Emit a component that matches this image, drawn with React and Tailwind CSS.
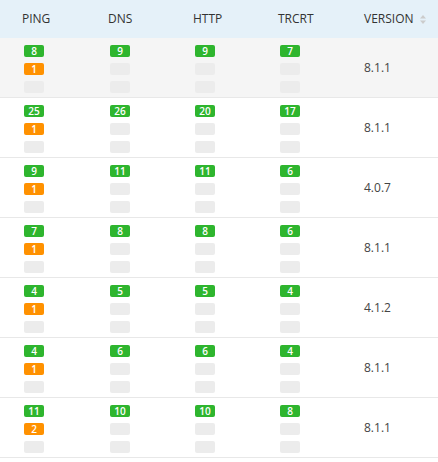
import React from "react";

const rows = [
  { v: [8, 9, 9, 7], o: 1, ver: "8.1.1", alt: true },
  { v: [25, 26, 20, 17], o: 1, ver: "8.1.1" },
  { v: [9, 11, 11, 6], o: 1, ver: "4.0.7" },
  { v: [7, 8, 8, 6], o: 1, ver: "8.1.1" },
  { v: [4, 5, 5, 4], o: 1, ver: "4.1.2" },
  { v: [4, 6, 6, 4], o: 1, ver: "8.1.1" },
  { v: [11, 10, 10, 8], o: 2, ver: "8.1.1" },
];

const widths = ["w-[86px]", "w-[85px]", "w-[85px]", "w-[86px]"];

function Badge({ color, children }) {
  return (
    <div
      className={`w-[20px] h-[12px] rounded-[2px] ${color} text-white text-[10px] leading-[12px] font-semibold text-center`}
    >
      {children}
    </div>
  );
}

function Cell({ value, orange, w }) {
  return (
    <div className={`${w} pl-[24px] pt-[7px] flex flex-col gap-[6px]`}>
      <Badge color="bg-[#2eb52e]">{value}</Badge>
      {orange ? (
        <Badge color="bg-[#ff9100]">{orange}</Badge>
      ) : (
        <Badge color="bg-[#ececec]" />
      )}
      <Badge color="bg-[#ececec]" />
    </div>
  );
}

export default function App() {
  return (
    <div
      className="w-[438px] h-[462px] bg-white text-[12px]"
      style={{ fontFamily: '"Open Sans", sans-serif' }}
    >
      <div className="h-[38px] bg-[#e5f1f9] flex items-center text-[#333]">
        {["PING", "DNS", "HTTP", "TRCRT"].map((h, i) => (
          <div key={h} className={`${widths[i]} pl-[22px]`}>
            {h}
          </div>
        ))}
        <div className="flex-1 pl-[22px] flex items-center gap-[6px]">
          <span>VERSION</span>
          <svg width="6" height="9" viewBox="0 0 6 9">
            <path d="M3 0 L6 3.5 L0 3.5 Z" fill="#cccccc" />
            <path d="M0 5.5 L6 5.5 L3 9 Z" fill="#cccccc" />
          </svg>
        </div>
      </div>
      {rows.map((r, idx) => (
        <div
          key={idx}
          className={`h-[60px] flex border-b border-[#e8e8e8] ${
            r.alt ? "bg-[#f5f5f5]" : "bg-white"
          }`}
        >
          {r.v.map((val, i) => (
            <Cell key={i} value={val} orange={i === 0 ? r.o : null} w={widths[i]} />
          ))}
          <div className="flex-1 pl-[22px] flex items-center text-[#444]">
            {r.ver}
          </div>
        </div>
      ))}
    </div>
  );
}
